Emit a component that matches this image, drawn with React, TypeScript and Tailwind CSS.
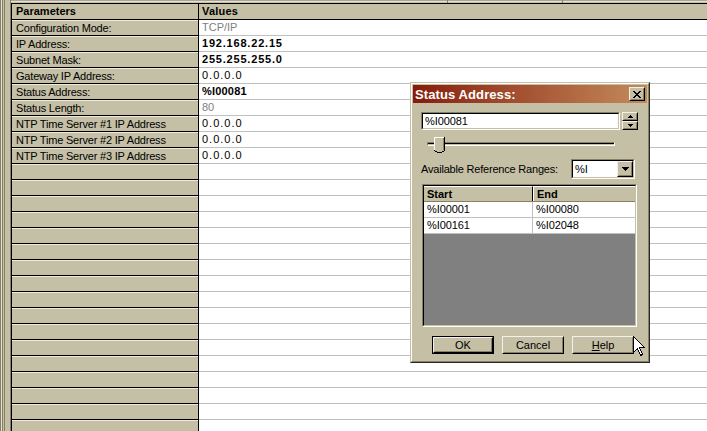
import React from "react";

const BEIGE = "bg-[#c4bfa5]";

type Row = { label: string; value?: string; kind?: "gray" | "bold" | "boldS" | "num" };

const rows: Row[] = [
  { label: "Configuration Mode:", value: "TCP/IP", kind: "gray" },
  { label: "IP Address:", value: "192.168.22.15", kind: "bold" },
  { label: "Subnet Mask:", value: "255.255.255.0", kind: "bold" },
  { label: "Gateway IP Address:", value: "0.0.0.0", kind: "num" },
  { label: "Status Address:", value: "%I00081", kind: "boldS" },
  { label: "Status Length:", value: "80", kind: "gray" },
  { label: "NTP Time Server #1 IP Address", value: "0.0.0.0", kind: "num" },
  { label: "NTP Time Server #2 IP Address", value: "0.0.0.0", kind: "num" },
  { label: "NTP Time Server #3 IP Address", value: "0.0.0.0", kind: "num" },
];
while (rows.length < 26) rows.push({ label: "" });

function valueClass(kind?: Row["kind"]) {
  switch (kind) {
    case "gray":
      return "text-[#808080]";
    case "bold":
      return "font-bold tracking-[0.8px] text-black";
    case "boldS":
      return "font-bold tracking-[0.2px] text-black";
    case "num":
      return "tracking-[1px] text-black";
    default:
      return "";
  }
}

const stripes = [
  "bg-[#858169]",
  "bg-[#e2ded0]",
  "bg-[#858169]",
  "bg-[#c4bfa5]",
  "bg-[#858169]",
  "bg-[#c4bfa5]",
  "bg-[#c4bfa5]",
  "bg-[#c4bfa5]",
  "bg-[#c4bfa5]",
  "bg-[#c4bfa5]",
  "bg-[#858169]",
];

function Raised({ className = "", children }: { className?: string; children?: React.ReactNode }) {
  return (
    <div className={`border border-t-[#f2f0e8] border-l-[#f2f0e8] border-b-black border-r-black ${BEIGE} ${className}`}>
      <div className="w-full h-full border border-t-[#c4bfa5] border-l-[#c4bfa5] border-b-[#858169] border-r-[#858169] flex items-center justify-center">
        {children}
      </div>
    </div>
  );
}

function Sunken({ className = "", children }: { className?: string; children?: React.ReactNode }) {
  return (
    <div className={`border border-t-[#858169] border-l-[#858169] border-b-white border-r-white ${className}`}>
      <div className="w-full h-full border border-t-black border-l-black border-b-[#c4bfa5] border-r-[#c4bfa5] flex">
        {children}
      </div>
    </div>
  );
}

function Btn({ label, def }: { label: React.ReactNode; def?: boolean }) {
  if (def) {
    return (
      <div className="w-[62px] h-[18px] border border-black">
        <Raised className="w-full h-full">
          <span className="text-[11px] leading-none">{label}</span>
        </Raised>
      </div>
    );
  }
  return (
    <Raised className="w-[62px] h-[18px]">
      <span className="text-[11px] leading-none">{label}</span>
    </Raised>
  );
}

function Dialog() {
  return (
    <div className="absolute left-[410px] top-[82px] w-[240px] h-[281px] border border-t-[#c4bfa5] border-l-[#c4bfa5] border-b-[#2a2a20] border-r-[#2a2a20] bg-[#c4bfa5]">
      <div className="w-full h-full border border-t-white border-l-white border-b-[#858169] border-r-[#858169]">
        {/* title bar */}
        <div className="mx-[1px] mt-[1px] h-[18px] bg-linear-to-r from-[#861a0b] to-[#c38a5b] flex items-center justify-between pl-[2px] pr-[2px]">
          <span className="text-white font-bold text-[13px] leading-none tracking-[0.1px]">Status Address:</span>
          <Raised className="w-[16px] h-[14px]">
            <svg width="8" height="7" viewBox="0 0 8 7" shapeRendering="crispEdges">
              <path d="M0 0h2v1h-2zM6 0h2v1h-2zM1 1h2v1h-2zM5 1h2v1h-2zM2 2h4v1h-4zM3 3h2v1h-2zM2 4h4v1h-4zM1 5h2v1h-2zM5 5h2v1h-2zM0 6h2v1h-2zM6 6h2v1h-2z" fill="black" />
            </svg>
          </Raised>
        </div>

        <div className="pl-[9px] flex flex-col">
          {/* spin input */}
          <div className="mt-[9px] flex gap-[2px] items-start">
            <Sunken className="w-[199px] h-[18px] bg-white">
              <span className="pl-[2px] text-[11px] leading-[14px] tracking-[-0.1px]">%I00081</span>
            </Sunken>
            <div className="flex flex-col w-[16px]">
              <Raised className="w-[16px] h-[9px]">
                <svg width="5" height="3" viewBox="0 0 5 3" shapeRendering="crispEdges">
                  <path d="M2 0h1v1h-1zM1 1h3v1h-3zM0 2h5v1h-5z" fill="black" />
                </svg>
              </Raised>
              <Raised className="w-[16px] h-[9px]">
                <svg width="5" height="3" viewBox="0 0 5 3" shapeRendering="crispEdges">
                  <path d="M0 0h5v1h-5zM1 1h3v1h-3zM2 2h1v1h-1z" fill="black" />
                </svg>
              </Raised>
            </div>
          </div>

          {/* slider */}
          <div className="mt-[7px] relative w-[199px] h-[16px]">
            <div className="absolute left-[6px] top-[5px] w-[188px] h-[4px] border border-t-[#858169] border-l-[#858169] border-b-white border-r-white">
              <div className="w-full h-full border-t border-black" />
            </div>
            <div className="absolute left-[13px] top-0">
              <svg width="11" height="16" viewBox="0 0 11 16" shapeRendering="crispEdges">
                <path d="M0 0h11v13l-5.5 3l-5.5-3z" fill="#c4bfa5" />
                <path d="M0 0h10v1h-9v12h-1z" fill="white" />
                <path d="M10 0h1v13h-1zM0 13h1v1h-1zM10 13h1v1h-1z" fill="black" />
                <path d="M9 1h1v12h-1z" fill="#858169" />
                <path d="M1 14h2v1h-2zM8 14h2v1h-2zM3 15h5v1h-5z" fill="black" />
              </svg>
            </div>
          </div>

          {/* ranges label + combo */}
          <div className="mt-[6px] flex items-center justify-between w-[214px]">
            <span className="text-[11px] tracking-[-0.2px] leading-none">Available Reference Ranges:</span>
            <Sunken className="w-[64px] h-[20px] bg-white">
              <div className="flex-1 pl-[2px] text-[11px] leading-[16px]">%I</div>
              <Raised className="w-[16px] h-[16px]">
                <svg width="7" height="4" viewBox="0 0 7 4" shapeRendering="crispEdges">
                  <path d="M0 0h7v1h-7zM1 1h5v1h-5zM2 2h3v1h-3zM3 3h1v1h-1z" fill="black" />
                </svg>
              </Raised>
            </Sunken>
          </div>

          {/* ranges table */}
          <div className="mt-[5px] ml-[1px]">
            <Sunken className="w-[215px] h-[143px]">
              <div className="flex-1 flex flex-col bg-[#808080]">
                <div className="flex h-[16px] bg-[#c4bfa5] border-b border-[#858169]">
                  <div className="w-[109px] h-full border-r border-r-black border-t border-t-white pl-[3px] font-bold text-[11px] leading-[14px]">Start</div>
                  <div className="flex-1 h-full border-t border-t-white border-l border-l-white pl-[3px] font-bold text-[11px] leading-[14px]">End</div>
                </div>
                {[
                  ["%I00001", "%I00080"],
                  ["%I00161", "%I02048"],
                ].map(([a, b]) => (
                  <div key={a} className="flex h-[16px] bg-white border-b border-[#c0c0c0]">
                    <div className="w-[109px] h-full border-r border-[#c0c0c0] pl-[3px] text-[11px] leading-[15px] tracking-[-0.1px]">{a}</div>
                    <div className="flex-1 h-full pl-[3px] text-[11px] leading-[15px] tracking-[-0.1px]">{b}</div>
                  </div>
                ))}
              </div>
            </Sunken>
          </div>

          {/* buttons */}
          <div className="mt-[9px] ml-[11px] flex gap-[8px]">
            <Btn label="OK" def />
            <Btn label="Cancel" />
            <Btn label={<><span className="underline">H</span>elp</>} />
          </div>
        </div>
      </div>
    </div>
  );
}

export default function App() {
  return (
    <div className="w-[707px] h-[431px] relative overflow-hidden bg-white flex font-['Liberation_Sans',Arial,sans-serif] text-[11px] text-black">
      {/* left stripes */}
      <div className="flex h-full">
        {stripes.map((c, i) => (
          <div key={i} className={`w-[1px] h-full ${c}`} />
        ))}
      </div>

      <div className="flex-1 flex flex-col">
        {/* top strip */}
        <div className="relative flex flex-col">
          <div className="h-[1px] bg-[#a9a58e]" />
          <div className="h-[1px] bg-[#e4e1d4]" />
          <div className="h-[1px] bg-[#c4bfa5]" />
          <div className="absolute left-[436px] top-0 w-[1px] h-[3px] bg-[#858169]" />
          <div className="absolute left-[551px] top-0 w-[1px] h-[3px] bg-[#858169]" />
        </div>

        {/* header row */}
        <div className="flex h-[17px] border-y border-black">
          <div className={`w-[188px] h-full border-x border-black ${BEIGE} pl-[4px] font-bold leading-[15px]`}>Parameters</div>
          <div className={`flex-1 h-full ${BEIGE} pl-[3px] font-bold leading-[15px] tracking-[0.2px]`}>Values</div>
        </div>

        {rows.map((r, i) => (
          <div key={i} className="flex h-[16px] shrink-0">
            <div className={`w-[188px] h-full border-x border-b border-black ${BEIGE}`}>
              <div className="h-full border-t border-[#eeebde] pl-[4px] leading-[14px] tracking-[-0.2px] whitespace-nowrap">{r.label}</div>
            </div>
            <div className="flex-1 h-full border-b border-[#c0c0c0] bg-white pl-[3px] leading-[15px] whitespace-nowrap">
              <span className={valueClass(r.kind)}>{r.value ?? ""}</span>
            </div>
          </div>
        ))}
      </div>

      <Dialog />

      {/* mouse cursor */}
      <svg className="absolute left-[633px] top-[336px]" width="13" height="21" viewBox="0 0 13 21" shapeRendering="crispEdges">
        <path d="M0.5 0.5 L0.5 16.5 L4.5 12.5 L7.5 19.5 L9.5 18.5 L6.5 11.5 L11.5 11.5 Z" fill="white" stroke="black" strokeWidth="1" />
      </svg>
    </div>
  );
}
